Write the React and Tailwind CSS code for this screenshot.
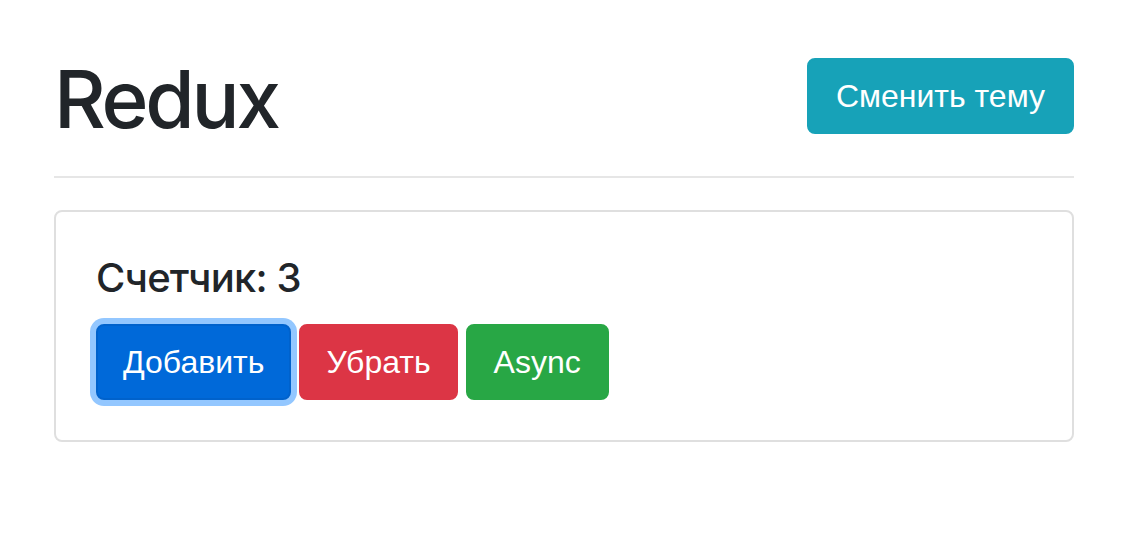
export default function App() {
  return (
    <div className="min-h-screen bg-white text-[#212529]" style={{ fontFamily: '"Liberation Sans", Arial, sans-serif' }}>
      <div className="ml-[54px] mr-[48px] pt-[51px]">
        {/* шапка */}
        <div className="flex items-start justify-between">
          <h1 className="font-['Inter',sans-serif] text-[80px] leading-[96px] font-medium tracking-[-0.04em]">Redux</h1>
          <button className="mt-[7px] h-[76px] px-[27px] rounded-[8px] border-2 border-[#17a2b8] bg-[#17a2b8] text-white text-[32px] leading-[48px]">
            Сменить тему
          </button>
        </div>

        <hr className="mt-[29px] mb-[32px] border-0 border-t-2 border-[#e6e6e6]" />

        {/* счетчик */}
        <div className="rounded-[8px] border-2 border-[#dfdfdf] px-[40px] pt-[42px] pb-[40px]">
          <h5 className="font-['Inter',sans-serif] text-[40px] leading-[48px] font-medium tracking-[-0.02em] mb-[22px]">Счетчик: 3</h5>
          <div className="flex gap-[8px]">
            <button className="h-[76px] px-[25px] rounded-[8px] border-2 border-[#0062cc] bg-[#0069d9] text-white text-[32px] leading-[48px] shadow-[0_0_0_6px_#93c7ff]">
              Добавить
            </button>
            <button className="h-[76px] px-[25px] rounded-[8px] border-2 border-[#dc3545] bg-[#dc3545] text-white text-[32px] leading-[48px]">
              Убрать
            </button>
            <button className="h-[76px] px-[26px] rounded-[8px] border-2 border-[#28a745] bg-[#28a745] text-white text-[32px] leading-[48px]">
              Async
            </button>
          </div>
        </div>
      </div>
    </div>
  );
}
